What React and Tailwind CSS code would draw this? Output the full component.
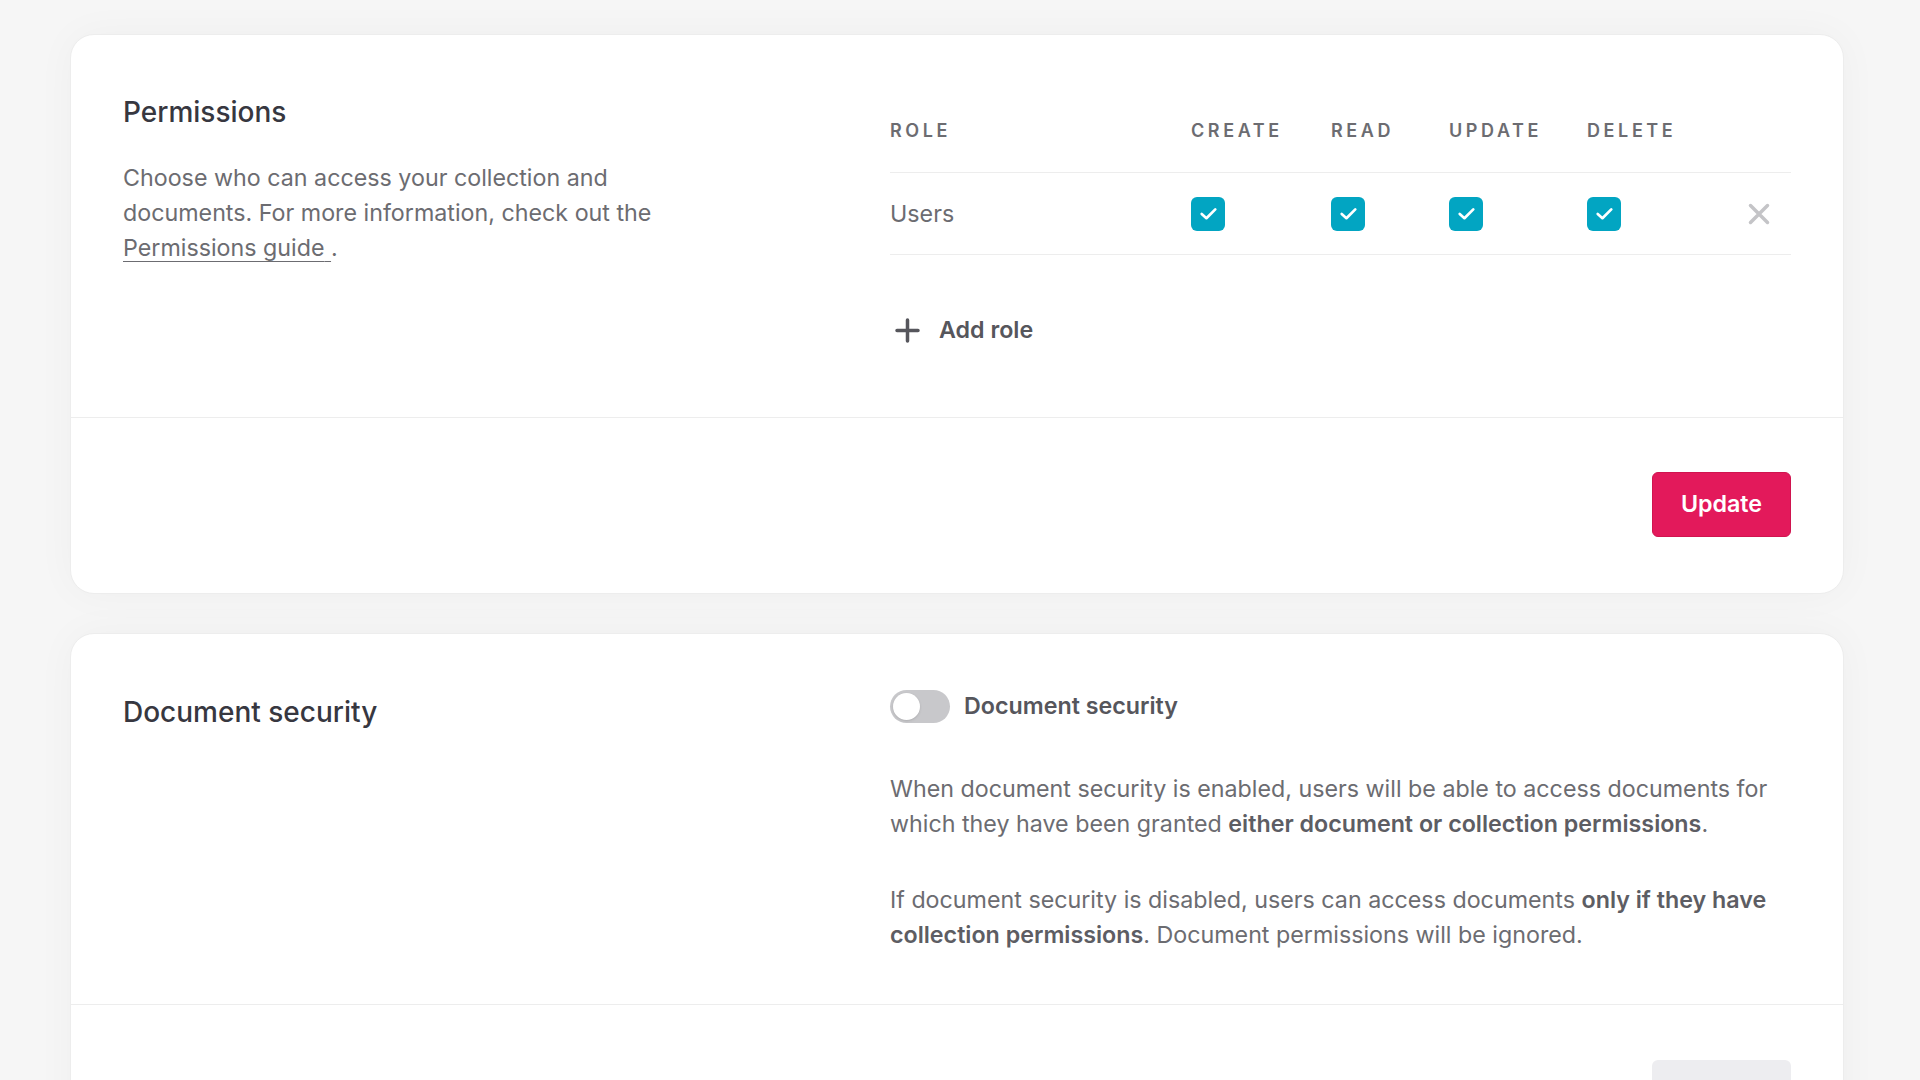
import { useState } from 'react';

const columns = [
  { key: 'create', label: 'Create', width: 'w-[140px]' },
  { key: 'read', label: 'Read', width: 'w-[118px]' },
  { key: 'update', label: 'Update', width: 'w-[138px]' },
  { key: 'delete', label: 'Delete', width: 'w-[140px]' },
];

const CheckBox = ({ checked }) => (
  <div
    className={`w-[34px] h-[34px] rounded-[6px] flex items-center justify-center ${
      checked ? 'bg-[#02a5c2]' : 'bg-white border-2 border-[#c4c4c7]'
    }`}
  >
    {checked && (
      <svg width="25" height="25" viewBox="0 0 24 24" fill="none">
        <polyline
          points="5.5,12.5 10,16.5 18.5,8"
          stroke="white"
          strokeWidth="2.6"
          strokeLinecap="round"
          strokeLinejoin="round"
        />
      </svg>
    )}
  </div>
);

const Card = ({ children }) => (
  <div className="bg-white rounded-[24px] border border-[#ededed] shadow-[0_0_40px_rgba(0,0,0,0.035)] flex-shrink-0">
    {children}
  </div>
);

const App = () => {
  const [docSecurity, setDocSecurity] = useState(false);

  return (
    <div className="h-screen overflow-hidden bg-[#f6f6f6] pt-[34px] pl-[70px] pr-[76px] font-[Inter,sans-serif] text-[#6c6c71]">
      <div className="flex flex-col gap-[39px]">
        {/* Permissions */}
        <Card>
          <div className="grid grid-cols-[767px_1fr] px-[52px] pt-[54px] pb-[69px]">
            <div>
              <h2 className="mt-[6px] text-[28px] leading-[35px] font-medium text-[#373740]">Permissions</h2>
              <p className="mt-[30px] max-w-[565px] text-[23.25px] leading-[35px]">
                Choose who can access your collection and documents. For more information, check out the{' '}
                <a href="#" className="underline underline-offset-[5px] decoration-1">
                  Permissions guide{' '}
                </a>
                .
              </p>
            </div>

            <div>
              <div className="flex items-center h-[84px] border-b border-[#ededed] text-[18px] font-semibold uppercase tracking-[0.2em] text-[#6c6c71]">
                <div className="w-[301px]">Role</div>
                {columns.map((c) => (
                  <div key={c.key} className={c.width}>
                    {c.label}
                  </div>
                ))}
                <div className="flex-1" />
              </div>

              <div className="flex items-center h-[82px] border-b border-[#ededed]">
                <div className="w-[301px] text-[23.25px] leading-[35px]">Users</div>
                {columns.map((c) => (
                  <div key={c.key} className={c.width}>
                    <CheckBox checked />
                  </div>
                ))}
                <div className="flex-1 flex justify-center">
                  <button className="p-0">
                    <svg width="22" height="22" viewBox="0 0 22 22" fill="none">
                      <path d="M2.5 2.5L19.5 19.5M19.5 2.5L2.5 19.5" stroke="#c4c4c7" strokeWidth="3.5" strokeLinecap="round" />
                    </svg>
                  </button>
                </div>
              </div>

              <button className="mt-[58px] flex items-center gap-[19px] h-[35px] pl-[5px] text-[23.25px] font-semibold text-[#56565c]">
                <svg width="25" height="25" viewBox="0 0 25 25" fill="none">
                  <path d="M12.5 2V23M2 12.5H23" stroke="#56565c" strokeWidth="3.5" strokeLinecap="round" />
                </svg>
                Add role
              </button>
            </div>
          </div>

          <div className="border-t border-[#ededed] flex justify-end px-[52px] pt-[54px] pb-[56px]">
            <button className="h-[65px] w-[139px] rounded-[6px] bg-[#e3195b] border border-[#d0144f] text-white text-[23.25px] font-semibold">
              Update
            </button>
          </div>
        </Card>

        {/* Document security */}
        <Card>
          <div className="grid grid-cols-[767px_1fr] px-[52px] pt-[56px] pb-[52px]">
            <div>
              <h2 className="mt-[5px] text-[28px] leading-[35px] font-medium text-[#373740]">Document security</h2>
            </div>

            <div>
              <div className="flex items-center gap-[14px] h-[33px]">
                <button
                  onClick={() => setDocSecurity(!docSecurity)}
                  className={`relative w-[60px] h-[33px] rounded-full flex-shrink-0 ${
                    docSecurity ? 'bg-[#02a5c2]' : 'bg-[#c8c8cb]'
                  }`}
                >
                  <span
                    className={`absolute top-[3px] w-[27px] h-[27px] rounded-full bg-white shadow-sm ${
                      docSecurity ? 'left-[30px]' : 'left-[3px]'
                    }`}
                  />
                </button>
                <span className="text-[23.25px] font-semibold text-[#56565c]">Document security</span>
              </div>

              <p className="mt-[48px] text-[23.25px] leading-[35px]">
                When document security is enabled, users will be able to access documents for which they have been
                granted <b className="font-semibold text-[#5d5d63]">either document or collection permissions</b>.
              </p>
              <p className="mt-[41px] text-[23.25px] leading-[35px]">
                If document security is disabled, users can access documents{' '}
                <b className="font-semibold text-[#5d5d63]">only if they have collection permissions</b>. Document
                permissions will be ignored.
              </p>
            </div>
          </div>

          <div className="border-t border-[#ededed] flex justify-end px-[52px] pt-[55px] pb-[54px]">
            <button disabled className="h-[65px] w-[139px] rounded-[6px] bg-[#ededf0] text-[#c4c4c9] text-[23.25px] font-semibold">
              Update
            </button>
          </div>
        </Card>
      </div>
    </div>
  );
};

export default App;
